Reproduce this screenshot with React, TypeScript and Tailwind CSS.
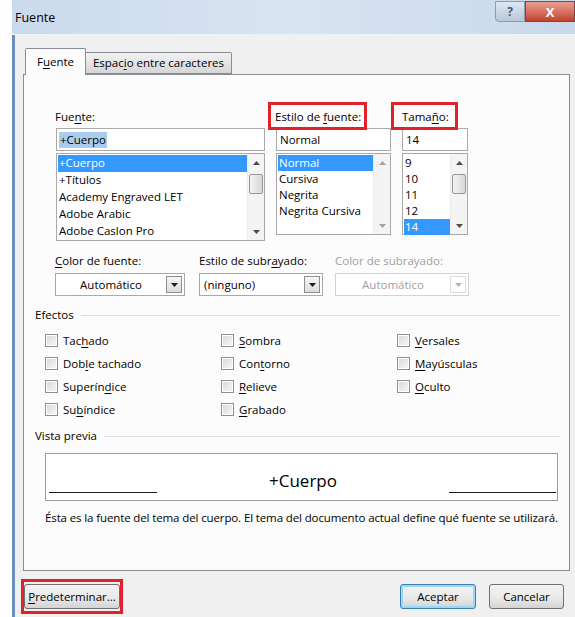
import React from "react";

const U = ({ children }: { children: React.ReactNode }) => (
  <span className="underline underline-offset-2 decoration-1">{children}</span>
);

function Arrow({ up, color = "#4d4d4d" }: { up?: boolean; color?: string }) {
  return (
    <svg width="7" height="4" viewBox="0 0 7 4">
      <path d={up ? "M0 4 L3.5 0 L7 4 Z" : "M0 0 L3.5 4 L7 0 Z"} fill={color} />
    </svg>
  );
}

function ScrollBar({ thumb, dim }: { thumb?: boolean; dim?: boolean }) {
  const c = dim ? "#a3a3a3" : "#4d4d4d";
  return (
    <div className="w-[17px] flex flex-col items-center bg-[#f4f4f4] border-l border-[#ececec]">
      <div className="h-[17px] flex items-center justify-center">
        <Arrow up color={c} />
      </div>
      <div className="flex-1 w-full px-[1px]">
        {thumb && (
          <div className="h-[20px] mt-[3px] rounded-[2px] border border-[#979797] bg-gradient-to-r from-[#f3f3f3] to-[#d8d8d8]" />
        )}
      </div>
      <div className="h-[17px] flex items-center justify-center">
        <Arrow color={c} />
      </div>
    </div>
  );
}

function ListBox({
  items,
  selected,
  h,
  rowH,
  thumb,
  dim,
}: {
  items: string[];
  selected: number;
  h: string;
  rowH: string;
  thumb?: boolean;
  dim?: boolean;
}) {
  return (
    <div className={`${h} border border-[#a9a9a9] bg-white flex`}>
      <div className="flex-1 pt-[1px] pl-[1px]">
        {items.map((it, i) => (
          <div
            key={it}
            className={`${rowH} pl-[1px] ${
              i === selected ? "bg-[#3399ff] text-white" : "text-black"
            }`}
          >
            {it}
          </div>
        ))}
      </div>
      <ScrollBar thumb={thumb} dim={dim} />
    </div>
  );
}

function Combo({
  value,
  w,
  center,
  disabled,
}: {
  value: string;
  w: string;
  center?: boolean;
  disabled?: boolean;
}) {
  return (
    <div
      className={`${w} h-[23px] flex items-center border ${
        disabled ? "border-[#d3d3d3]" : "border-[#a9a9a9]"
      } bg-white`}
    >
      <div
        className={`flex-1 px-[4px] ${center ? "text-center" : ""} ${
          disabled ? "text-[#a0a0a0]" : "text-black"
        }`}
      >
        {value}
      </div>
      <div
        className={`w-[16px] h-[17px] mr-[2px] flex items-center justify-center border ${
          disabled
            ? "border-[#dcdcdc] bg-white"
            : "border-[#8d8d8d] bg-gradient-to-b from-[#f6f6f6] to-[#dcdcdc]"
        }`}
      >
        <Arrow color={disabled ? "#b5b5b5" : "#1e1e1e"} />
      </div>
    </div>
  );
}

function Check({ label }: { label: React.ReactNode }) {
  return (
    <div className="flex items-center gap-[5px] h-[23px]">
      <div className="w-[13px] h-[13px] border border-[#8e8f8f] bg-white p-[1px]">
        <div className="w-full h-full bg-gradient-to-br from-[#d9d9d9] to-[#f7f7f7]" />
      </div>
      <span>{label}</span>
    </div>
  );
}

function Redbox({ className }: { className: string }) {
  return <span className={`absolute border-[3px] border-[#e0202a] ${className}`} />;
}

function Button({
  children,
  w,
  primary,
}: {
  children: React.ReactNode;
  w: string;
  primary?: boolean;
}) {
  return (
    <div
      className={`${w} h-[25px] rounded-[3px] border ${
        primary ? "border-[#3c7fb1] shadow-[inset_0_0_0_2px_#9ad7f5]" : "border-[#707070]"
      } bg-gradient-to-b from-[#f2f2f2] via-[#ebebeb] to-[#d4d4d4] flex items-center justify-center`}
    >
      {children}
    </div>
  );
}

export default function App() {
  return (
    <div className="w-[575px] h-[617px] bg-white flex font-['Open_Sans','Noto_Sans',sans-serif] text-[11.5px] text-black leading-[16px] overflow-hidden">
      <div className="w-[12px]" />
      <div className="flex-1 flex flex-col">
        {/* title bar */}
        <div className="h-[35px] flex bg-gradient-to-r from-[#cbdaec] via-[#d9e4f1] to-[#c9d8ea] border-b border-[#eef3f8]">
          <div className="flex-1 pl-[3px] pt-[10px] text-[12.5px] text-black">Fuente</div>
          <div className="flex items-start">
            <div className="w-[30px] h-[21px] mt-[1px] rounded-bl-[4px] border border-[#8a9bb2] bg-gradient-to-b from-[#dfe7f1] to-[#b8c7da] flex items-center justify-center text-[#4a5a70] font-bold text-[12px]">
              ?
            </div>
            <div className="w-[50px] h-[21px] mt-[1px] border border-[#8a4040] bg-gradient-to-b from-[#e8a091] to-[#c2402e] flex items-center justify-center text-white font-bold text-[13px]">
              X
            </div>
          </div>
        </div>

        <div className="flex-1 flex">
          <div className="w-[3px] bg-[#6d8fbf]" />
          <div className="flex-1 bg-[#f0f0f0] flex flex-col pl-[8px] pr-[5px] pt-[13px]">
            {/* tabs */}
            <div className="flex items-end pl-[2px] h-[27px] relative z-10">
              <div className="w-[61px] h-[27px] bg-[#fcfcfc] border border-b-0 border-[#898c95] rounded-t-[2px] flex items-center justify-center pb-[1px]">
                F<U>u</U>ente
              </div>
              <div className="w-[146px] h-[22px] mb-[1px] bg-gradient-to-b from-[#f2f2f2] to-[#d6d6d6] border border-l-0 border-[#898c95] rounded-tr-[2px] flex items-center justify-center">
                Espac<U>i</U>o entre caracteres
              </div>
            </div>

            {/* panel */}
            <div className="h-[497px] -mt-[1px] border border-[#898c95] bg-[#fcfcfc] flex flex-col">
              {/* font / style / size */}
              <div className="flex pl-[32px] pt-[34px]">
                <div className="w-[209px]">
                  <div className="h-[16px] mb-[3px] -ml-[1px]">
                    Fue<U>n</U>te:
                  </div>
                  <div className="h-[23px] border border-[#a9a9a9] bg-white flex items-center pl-[2px]">
                    <span className="bg-[#aacdee] px-[1px]">+Cuerpo</span>
                  </div>
                  <div className="mt-[2px]">
                    <ListBox
                      items={["+Cuerpo", "+Títulos", "Academy Engraved LET", "Adobe Arabic", "Adobe Caslon Pro"]}
                      selected={0}
                      h="h-[88px]"
                      rowH="h-[17px]"
                      thumb
                    />
                  </div>
                </div>
                <div className="w-[115px] ml-[11px]">
                  <div className="h-[16px] mb-[3px] -ml-[1px] relative inline-block">
                    Estilo de <U>f</U>uente:
                    <Redbox className="-left-[7px] -right-[6px] -top-[7px] -bottom-[5px]" />
                  </div>
                  <div className="h-[23px] border border-[#a9a9a9] bg-white flex items-center pl-[3px]">Normal</div>
                  <div className="mt-[2px]">
                    <ListBox
                      items={["Normal", "Cursiva", "Negrita", "Negrita Cursiva"]}
                      selected={0}
                      h="h-[82px]"
                      rowH="h-[16px]"
                      dim
                    />
                  </div>
                </div>
                <div className="w-[66px] ml-[11px]">
                  <div className="h-[16px] mb-[3px] relative inline-block">
                    Tama<U>ñ</U>o:
                    <Redbox className="-left-[11px] -right-[9px] -top-[7px] -bottom-[5px]" />
                  </div>
                  <div className="h-[23px] border border-[#a9a9a9] bg-white flex items-center pl-[3px]">14</div>
                  <div className="mt-[2px]">
                    <ListBox
                      items={["9", "10", "11", "12", "14"]}
                      selected={4}
                      h="h-[82px]"
                      rowH="h-[16px]"
                      thumb
                    />
                  </div>
                </div>
              </div>

              {/* colour and underline */}
              <div className="flex pl-[31px] mt-[12px]">
                <div className="w-[130px]">
                  <div className="h-[16px] mb-[4px]">
                    <U>C</U>olor de fuente:
                  </div>
                  <Combo value="Automático" w="w-[130px]" center />
                </div>
                <div className="w-[124px] ml-[14px]">
                  <div className="h-[16px] mb-[4px]">
                    Estilo de subr<U>a</U>yado:
                  </div>
                  <Combo value="(ninguno)" w="w-[124px]" />
                </div>
                <div className="w-[134px] ml-[12px]">
                  <div className="h-[16px] mb-[4px] text-[#a0a0a0]">Color de subrayado:</div>
                  <Combo value="Automático" w="w-[134px]" center disabled />
                </div>
              </div>

              {/* effects */}
              <div className="flex items-center pl-[11px] pr-[9px] mt-[11px] h-[16px]">
                <span>Efectos</span>
                <div className="flex-1 ml-[7px] h-px bg-[#d5dfe5]" />
              </div>
              <div className="grid grid-cols-[176px_176px_1fr] pl-[21px] mt-[6px]">
                <div>
                  <Check label={<>Tac<U>h</U>ado</>} />
                  <Check label={<>Dob<U>l</U>e tachado</>} />
                  <Check label={<>Superín<U>d</U>ice</>} />
                  <Check label={<>Su<U>b</U>índice</>} />
                </div>
                <div>
                  <Check label={<><U>S</U>ombra</>} />
                  <Check label={<>Con<U>t</U>orno</>} />
                  <Check label={<><U>R</U>elieve</>} />
                  <Check label={<><U>G</U>rabado</>} />
                </div>
                <div>
                  <Check label={<><U>V</U>ersales</>} />
                  <Check label={<><U>M</U>ayúsculas</>} />
                  <Check label={<><U>O</U>culto</>} />
                </div>
              </div>

              {/* preview */}
              <div className="flex items-center pl-[11px] pr-[9px] mt-[7px] h-[16px]">
                <span>Vista previa</span>
                <div className="flex-1 ml-[7px] h-px bg-[#d5dfe5]" />
              </div>
              <div className="ml-[21px] mr-[11px] mt-[9px] h-[48px] border border-[#9c9c9c] bg-white flex items-end pb-[7px]">
                <div className="w-[108px] ml-[3px] h-px bg-[#1a1a1a]" />
                <div className="flex-1 text-center text-[17px] leading-[22px] mb-[1px]">+Cuerpo</div>
                <div className="w-[107px] mr-[1px] h-px bg-[#1a1a1a]" />
              </div>
              <div className="pl-[21px] mt-[9px] tracking-[-0.12px] whitespace-nowrap">
                Ésta es la fuente del tema del cuerpo. El tema del documento actual define qué fuente se utilizará.
              </div>
            </div>

            {/* buttons */}
            <div className="flex items-center pl-[1px] pr-[6px] mt-[13px]">
              <div className="relative">
                <Button w="w-[96px]">
                  <span>
                    <U>P</U>redeterminar...
                  </span>
                </Button>
                <Redbox className="-left-[3px] -right-[3px] -top-[5px] -bottom-[5px]" />
              </div>
              <div className="flex-1" />
              <Button w="w-[76px]" primary>
                Aceptar
              </Button>
              <div className="w-[13px]" />
              <Button w="w-[75px]">Cancelar</Button>
            </div>
          </div>
        </div>
      </div>
    </div>
  );
}
